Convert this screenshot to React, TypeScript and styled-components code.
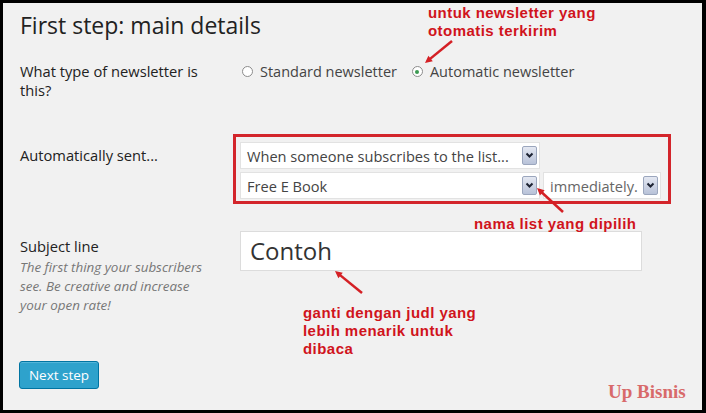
import styled, { createGlobalStyle } from "styled-components";

const GlobalStyle = createGlobalStyle`
  html, body {
    margin: 0;
    padding: 0;
    background: #fff;
  }
  body {
    font-family: "Open Sans", "Liberation Sans", sans-serif;
  }
`;

const Frame = styled.div`
  position: relative;
  box-sizing: border-box;
  width: 706px;
  height: 413px;
  border-style: solid;
  border-color: #000;
  border-width: 3px 4px 3px 3px;
  background: #f1f1f1;
  overflow: hidden;
  padding: 0 0 0 17px;
  color: #222;
`;

const Title = styled.h2`
  margin: 8px 0 0;
  font-size: 23px;
  line-height: 29px;
  font-weight: 400;
  color: #222;
`;

const FormRow = styled.div<{ $top: number }>`
  display: grid;
  grid-template-columns: 220px 1fr;
  margin-top: ${(p) => p.$top}px;
`;

const Label = styled.div<{ $pad?: number }>`
  font-size: 14.7px;
  line-height: 19px;
  color: #222;
  padding-top: ${(p) => p.$pad ?? 0}px;
  width: 200px;
`;

const Description = styled.div`
  margin-top: 2px;
  font-size: 13.4px;
  line-height: 19px;
  font-style: italic;
  color: #777;
  width: 192px;
`;

const RadioGroup = styled.div`
  display: flex;
  align-items: center;
  height: 19px;
  padding-left: 2px;
`;

const RadioOption = styled.label`
  display: flex;
  align-items: center;
  gap: 7px;
  margin-right: 15px;
  font-size: 14.5px;
  color: #444;
`;

const RadioCircle = styled.span<{ $checked?: boolean }>`
  box-sizing: border-box;
  width: 11px;
  height: 11px;
  border-radius: 50%;
  border: 1px solid #8c8c8c;
  background: #fff;
  display: flex;
  align-items: center;
  justify-content: center;
  &::after {
    content: "";
    display: ${(p) => (p.$checked ? "block" : "none")};
    width: 4px;
    height: 4px;
    border-radius: 50%;
    background: #3c9a52;
  }
`;

const Highlight = styled.div`
  box-sizing: border-box;
  margin-left: -7px;
  width: 438px;
  border: 3px solid #d3252b;
  padding: 5px 4px 2px 4px;
  display: flex;
  flex-direction: column;
  gap: 3px;
`;

const SelectLine = styled.div`
  display: flex;
  gap: 3px;
`;

const SelectBox = styled.div<{ $w: number; $tone?: string }>`
  box-sizing: border-box;
  width: ${(p) => p.$w}px;
  height: 27px;
  background: #fff;
  border: 1px solid #e2e2e2;
  display: flex;
  align-items: center;
  justify-content: space-between;
  padding: 0 2px 0 6px;
  font-size: 14.6px;
  color: ${(p) => p.$tone ?? "#444"};
`;

const ArrowButton = styled.span`
  box-sizing: border-box;
  width: 15px;
  height: 19px;
  border: 1px solid #9ba6bd;
  border-radius: 2px;
  background: linear-gradient(#e4e8f2, #b8c2d8);
  display: flex;
  align-items: center;
  justify-content: center;
`;

const TextInput = styled.div`
  box-sizing: border-box;
  width: 402px;
  height: 40px;
  background: #fff;
  border: 1px solid #dcdcdc;
  padding-left: 9px;
  font-size: 24px;
  line-height: 37px;
  color: #333;
`;

const Button = styled.button`
  display: block;
  box-sizing: border-box;
  margin: 46px 0 0 -1px;
  width: 80px;
  height: 28px;
  padding: 0;
  background: #2ea2cc;
  border: 1px solid #0074a2;
  border-radius: 3px;
  box-shadow: inset 0 1px 0 rgba(120, 200, 230, 0.5);
  color: #fff;
  font-family: "Open Sans", "Liberation Sans", sans-serif;
  font-size: 13.5px;
`;

const Note = styled.div<{ $x: number; $y: number }>`
  position: absolute;
  left: ${(p) => p.$x - 3}px;
  top: ${(p) => p.$y - 3}px;
  font-family: "Liberation Sans", Arial, sans-serif;
  font-weight: 700;
  font-size: 15px;
  letter-spacing: 0.45px;
  line-height: 18px;
  color: #d0141c;
  white-space: pre;
`;

const Watermark = styled.div`
  position: absolute;
  left: 605px;
  top: 378px;
  font-family: "Liberation Serif", "Times New Roman", serif;
  font-weight: 700;
  font-size: 19px;
  color: #d86a6a;
`;

const Overlay = styled.svg`
  position: absolute;
  left: -3px;
  top: -3px;
  pointer-events: none;
`;

function Chevron() {
  return (
    <svg width="9" height="7" viewBox="0 0 9 7">
      <path d="M1.5 1.5 L4.5 4.5 L7.5 1.5" fill="none" stroke="#1d2333" strokeWidth="2" />
    </svg>
  );
}

function Arrow({ x1, y1, x2, y2 }: { x1: number; y1: number; x2: number; y2: number }) {
  const a = Math.atan2(y2 - y1, x2 - x1);
  const len = 8;
  const spread = 0.45;
  const p1 = [x2 - len * Math.cos(a - spread), y2 - len * Math.sin(a - spread)];
  const p2 = [x2 - len * Math.cos(a + spread), y2 - len * Math.sin(a + spread)];
  return (
    <g>
      <line x1={x1} y1={y1} x2={x2 - 3 * Math.cos(a)} y2={y2 - 3 * Math.sin(a)} stroke="#d42025" strokeWidth="2.5" />
      <polygon points={`${x2},${y2} ${p1[0]},${p1[1]} ${p2[0]},${p2[1]}`} fill="#d42025" />
    </g>
  );
}

export default function App() {
  return (
    <>
      <GlobalStyle />
      <Frame>
        <Title>First step: main details</Title>

        <FormRow $top={22}>
          <Label>What type of newsletter is this?</Label>
          <RadioGroup>
            <RadioOption>
              <RadioCircle />
              Standard newsletter
            </RadioOption>
            <RadioOption>
              <RadioCircle $checked />
              Automatic newsletter
            </RadioOption>
          </RadioGroup>
        </FormRow>

        <FormRow $top={34}>
          <Label $pad={12}>Automatically sent...</Label>
          <Highlight>
            <SelectLine>
              <SelectBox $w={300}>
                When someone subscribes to the list...
                <ArrowButton>
                  <Chevron />
                </ArrowButton>
              </SelectBox>
            </SelectLine>
            <SelectLine>
              <SelectBox $w={300}>
                Free E Book
                <ArrowButton>
                  <Chevron />
                </ArrowButton>
              </SelectBox>
              <SelectBox $w={118} $tone="#666">
                immediately.
                <ArrowButton>
                  <Chevron />
                </ArrowButton>
              </SelectBox>
            </SelectLine>
          </Highlight>
        </FormRow>

        <FormRow $top={27}>
          <div>
            <Label $pad={6}>Subject line</Label>
            <Description>The first thing your subscribers see. Be creative and increase your open rate!</Description>
          </div>
          <TextInput>Contoh</TextInput>
        </FormRow>

        <Button>Next step</Button>

        <Note $x={428} $y={4}>{"untuk newsletter yang\notomatis terkirim"}</Note>
        <Note $x={474} $y={215}>nama list yang dipilih</Note>
        <Note $x={303} $y={304}>{"ganti dengan judl yang\nlebih menarik untuk\ndibaca"}</Note>
        <Watermark>Up Bisnis</Watermark>

        <Overlay width="706" height="413" viewBox="0 0 706 413">
          <Arrow x1={452} y1={41} x2={425} y2={63} />
          <Arrow x1={563} y1={212} x2={537} y2={188} />
          <Arrow x1={362} y1={293} x2={335} y2={271} />
        </Overlay>
      </Frame>
    </>
  );
}
